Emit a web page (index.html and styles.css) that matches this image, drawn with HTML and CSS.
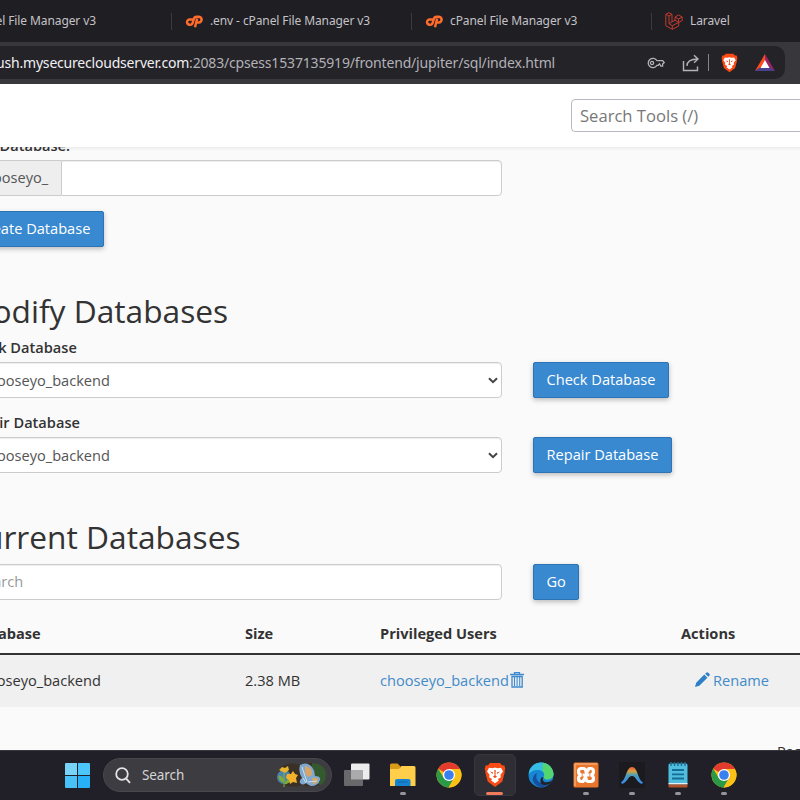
FILE: index.html
```html
<!DOCTYPE html>
<html lang="en">
<head>
    <meta charset="UTF-8">
    <meta name="viewport" content="width=device-width, initial-scale=1.0">
    <title>MySQL Databases</title>
    <link rel="stylesheet" href="styles.css">
</head>
<body>
    <!-- shared icons -->
    <svg class="defs" width="0" height="0">
        <symbol id="cp" viewBox="0 0 18 13">
            <g fill="none" stroke="#ff6c2c" stroke-width="2.5">
                <path d="M7.600 4.500H4.800a2.600 2.600 0 0 0-.3 5.200h1.300c1.100 0 1.500-.6 1.800-1.600L8.700 4.200C9.200 2.400 10 1.700 11.600 1.700h2a2.900 2.900 0 0 1 .2 5.800h-2.300"/>
                <path d="M12.200 3.500L10 12.200"/>
            </g>
        </symbol>
        <symbol id="chrome" viewBox="0 0 26 26">
            <circle cx="13" cy="13" r="12.5" fill="#fbc116"/>
            <path d="M13 13L2.2 6.8A12.5 12.5 0 0 1 23.9 7H13z" fill="#e33b2e"/>
            <path d="M2.2 6.8A12.5 12.5 0 0 0 12.6 25.5L18 16l-5-3-5.2 3z" fill="#2b9a47"/>
            <path d="M12.6 25.5A12.5 12.5 0 0 0 23.9 7H13l5.2 9z" fill="#fbc116"/>
            <circle cx="13" cy="13" r="6.1" fill="#fff"/>
            <circle cx="13" cy="13" r="4.8" fill="#3a7ff0"/>
        </symbol>
        <symbol id="brave" viewBox="0 0 22 26">
            <path d="M6 1h10l2 2.2 2.4.2L21.300 7l-.8 2 .3 1-2.500 9.500L11 25l-7.300-5.500L1.200 10l.3-1-.8-2 .9-3.600L4 3.200z" fill="#fb4a14"/>
            <path d="M5 5.800l3.500.5L11 5.500l2.500.8 3.500-.5 2 3.600-2.500 3.400.2 2.600-2.800 1.500 1 1.500-3.900 2.900-3.900-2.900 1-1.500-2.800-1.500.2-2.600L3 9.400z" fill="#fff"/>
            <path d="M5.800 9.600l3.400.8-.4 1.600zM16.200 9.600l-3.400.8.4 1.600zM10.300 8h1.400l-.2 5.500 1.600 1.200-2.100 1.300-2.100-1.300 1.600-1.200z" fill="#f04a18"/>
        </symbol>
    </svg>

    <div class="tabs">
        <div class="tab tab-first"><span>cPanel File Manager v3</span></div>
        <div class="tab">
            <svg class="tab-icon" width="18" height="13"><use href="#cp"/></svg>
            <span>.env - cPanel File Manager v3</span>
        </div>
        <div class="tab">
            <svg class="tab-icon" width="18" height="13"><use href="#cp"/></svg>
            <span>cPanel File Manager v3</span>
        </div>
        <div class="tab">
            <svg class="tab-icon" width="18" height="18" viewBox="0 0 18 18" fill="none" stroke="#c23a2e" stroke-width="1">
                <path d="M.8 2.300L4 .7l3 1.600v7.600l3-1.700V5l3.500-2 3.700 2v3.600l-3.500 2V14l-6.300 3.300L.8 13.800z"/>
                <path d="M.8 2.300L4 4v7.700l3.300 2 6.400-3.300M4 4l3-1.700M4 11.700l3-1.800M7.300 13.700v3.600M10 5l3.600 2 3.600-2M13.600 7v3.500M10 8.200l3.600 2.200"/>
            </svg>
            <span>Laravel</span>
        </div>
    </div>

    <div class="toolbar">
        <div class="address">
            <div class="url"><span class="host">ush.mysecurecloudserver.com</span><span class="path">:2083/cpsess1537135919/frontend/jupiter/sql/index.html</span></div>
            <svg class="key" width="18" height="12" viewBox="0 0 18 12" fill="none" stroke="#b4b3b8" stroke-width="1.300">
                <path d="M10 3.700A4.700 4.700 0 1 0 10 8.300h1.200l1.300-1.500 1.300 2.300h1.800V7l1.600-1.500-1.500-1.800z"/>
                <circle cx="5" cy="6" r="1.600"/>
            </svg>
            <svg class="share" width="18" height="18" viewBox="0 0 18 18" fill="none" stroke="#b4b3b8" stroke-width="1.400">
                <path d="M1.500 7v9.500h14v-4"/>
                <path d="M5 12c0-4.500 3-7 11-7M12 1.200L16 5l-4 3.800"/>
            </svg>
            <span class="divider"></span>
            <svg class="shield" width="17" height="20"><use href="#brave"/></svg>
            <svg width="20" height="17" viewBox="0 0 20 17">
                <path d="M10 0L0 17l10-6z" fill="#ff4a1c"/>
                <path d="M10 0l10 17-10-6z" fill="#972465"/>
                <path d="M0 17h20l-5-3.500H5z" fill="#4a4090"/>
                <path d="M10 6l4.500 8h-9z" fill="#fff"/>
            </svg>
        </div>
    </div>

    <header class="header">
        <input class="search-tools" type="text" placeholder="Search Tools (/)">
    </header>

    <main class="page">
        <div class="content">
            <label class="label" for="dbname">New Database:</label>
            <div class="group">
                <span class="prefix">chooseyo_</span>
                <input class="control" type="text" id="dbname">
            </div>
            <button class="btn">Create Database</button>

            <h2 class="modify">Modify Databases</h2>
            <label class="label" for="check">Check Database</label>
            <div class="row">
                <div class="control select" id="check">chooseyo_backend
                    <svg width="10" height="7" viewBox="0 0 10 7"><path d="M1 1.200l4 4 4-4" fill="none" stroke="#444" stroke-width="2"/></svg>
                </div>
                <button class="btn">Check Database</button>
            </div>
            <label class="label" for="repair">Repair Database</label>
            <div class="row">
                <div class="control select" id="repair">chooseyo_backend
                    <svg width="10" height="7" viewBox="0 0 10 7"><path d="M1 1.200l4 4 4-4" fill="none" stroke="#444" stroke-width="2"/></svg>
                </div>
                <button class="btn">Repair Database</button>
            </div>

            <h2 class="current">Current Databases</h2>
            <div class="row">
                <input class="control" type="text" placeholder="Search">
                <button class="btn">Go</button>
            </div>
            <table class="table">
                <thead>
                    <tr>
                        <th class="col-db">Database</th>
                        <th class="col-size">Size</th>
                        <th class="col-users">Privileged Users</th>
                        <th>Actions</th>
                    </tr>
                </thead>
                <tbody>
                    <tr>
                        <td>chooseyo_backend</td>
                        <td>2.38 MB</td>
                        <td><a href="#">chooseyo_backend<svg class="trash" width="14" height="16" viewBox="0 0 14 16" fill="none" stroke="#3c8ad0">
                            <path d="M0 2.500h14M4.500 2V.7h5V2M2 4.500h10.200V15H2z" stroke-width="1.300"/>
                            <path d="M4.500 5v9M7.100 5v9M9.700 5v9" stroke-width="1.100"/>
                        </svg></a></td>
                        <td class="actions"><a href="#"><svg class="pencil" width="15" height="15" viewBox="0 0 15 15" fill="#2f7fc8">
                            <path d="M0 15l1.200-4.300L9.300 2.600l3.100 3.100-8.100 8.100zM10.200 1.700l1-1c.7-.7 1.300-.7 2 0l1.100 1.100c.7.7.7 1.300 0 2l-1 1z"/>
                        </svg>Rename</a></td>
                    </tr>
                </tbody>
            </table>
            <div class="pager">Page Size</div>
        </div>
    </main>

    <footer class="taskbar">
        <svg class="start" width="25" height="25" viewBox="0 0 25 25">
            <path d="M0 1q0-1 1-1h11v12H0z" fill="#77d3f8"/>
            <path d="M13 0h11q1 0 1 1v11H13z" fill="#4cc5fa"/>
            <path d="M0 13h12v12H1q-1 0-1-1z" fill="#48c0f8"/>
            <path d="M13 13h12v11q0 1-1 1H13z" fill="#25b0f8"/>
        </svg>
        <div class="search">
            <svg width="16" height="17" viewBox="0 0 16 17" fill="none" stroke="#e4e4e6" stroke-width="1.800">
                <circle cx="7" cy="7" r="5.800"/><path d="M11 11.300l4 4.500"/>
            </svg>
            <span>Search</span>
            <svg class="butterfly" width="50" height="26" viewBox="0 0 50 26">
                <path d="M4 5Q12-1 24 3q14-6 23 5 3 9-2 14-11 4-20 1-8 3-19 0-8-10-2-18z" fill="#3b3026"/>
                <path d="M35 1q13 1 14 11 0 8-5 11l-9-3z" fill="#35592f"/>
                <circle cx="7" cy="15" r="7" fill="#4a83a8"/>
                <path d="M7 25V11M7 20q-5-1-5-6 5 1 5 6zM8 22q5-1 6-5-5 0-6 5z" fill="#80ad37" stroke="#80ad37"/>
                <path d="M2 8l3-3 3 1 3-2 1 4-4 3z" fill="#eab52e"/>
                <path d="M10 12l4 0 2-3 2 3 3 1-2 3 1 5-4-1-3 2-1-4-3-2z" fill="#f4b12b"/>
                <path d="M23 3q7-4 12 2 3 4 3 9 6 0 5 4-2 6-9 6-3-1-5-3-3 3-6 0-1-3 2-5-4-6-2-13z" fill="#7fa9ce"/>
                <path d="M28 4q8 1 7 9l-4 2-3-4zM35 16q6-1 6 2-1 4-5 4z" fill="#d7a668"/>
                <path d="M25 5l5 15M29 21l-3-5M31 20l9-1" stroke="#c8e0ee" fill="none"/>
            </svg>
        </div>

        <div class="apps">
            <div class="app">
                <svg width="26" height="26" viewBox="0 0 26 26">
                    <rect x="7" y="1.500" width="18.500" height="16" rx="1" fill="#ececec"/>
                    <rect x="0" y="8" width="19" height="16" rx="1" fill="#69696b"/>
                    <path d="M7 8h12v9.500H7z" fill="#aaaaac"/>
                </svg>
            </div>
            <div class="app open">
                <svg width="26" height="26" viewBox="0 0 26 26">
                    <path d="M0 3q0-1.500 1.500-1.500h6l3 3V9H0z" fill="#d99a17"/>
                    <path d="M0 7h9l2.500-3H24q1.500 0 1.500 1.500V24H0z" fill="#ffcf4b"/>
                    <path d="M5 24v-5q0-2 2-2h11.500q2 0 2 2v5z" fill="#1683d0"/>
                    <path d="M8 20h9.500" stroke="#0e65ae" stroke-width="1"/>
                </svg>
            </div>
            <div class="app"><svg width="26" height="26"><use href="#chrome"/></svg></div>
            <div class="app active"><svg width="22" height="26"><use href="#brave"/></svg></div>
            <div class="app">
                <svg width="26" height="26" viewBox="0 0 26 26">
                    <circle cx="13" cy="13" r="12.500" fill="#1787d4"/>
                    <path d="M1 10C4-3 24-3 25.500 12c0 6-9 7-10 3 2-4-1-7-6-7-4 0-7 2-8.500 4z" fill="#35bde4"/>
                    <path d="M15 .7c6 1 10.500 6 10.500 11.500 0 6-9 7-10 3 2-2 1-5-1-6z" fill="#55d56d"/>
                    <path d="M9 11c-3 8 4 13 14 9-3 4-7 5.500-11 5.300C3 22 3 14 9 11z" fill="#164f9b"/>
                    <path d="M15.500 15q-2 3 1 5 4 1 8-2-1.500 3-3 4-10 3-9-4 0-3 3-3z" fill="#23222a"/>
                </svg>
            </div>
            <div class="app open">
                <svg width="26" height="26" viewBox="0 0 26 26">
                    <rect x=".5" y=".5" width="25" height="25" rx="1.500" fill="#e9742b"/>
                    <path d="M2 2h22M2 2v22" stroke="#f3a66d" stroke-width="1.500"/>
                    <path d="M8.500 6.500h1.500q3 0 3 3t3-3h1.500q3 0 3 3t-3 3.500q3 .5 3 3.500t-3 3h-1.500q-3 0-3-3t-3 3H8.500q-3 0-3-3T8.500 13q-3-.5-3-3.500t3-3zM9.500 13h7" fill="none" stroke="#fff" stroke-width="3.200"/>
                </svg>
            </div>
            <div class="app open">
                <svg width="26" height="26" viewBox="0 0 26 26">
                    <defs><linearGradient id="rainbow" x2="0" y2="1"><stop offset="0" stop-color="#f05b35"/><stop offset=".25" stop-color="#d9a13f"/><stop offset=".48" stop-color="#4c9fb5"/><stop offset="1" stop-color="#3589f4"/></linearGradient></defs>
                    <rect width="26" height="26" fill="#1b1a1f"/>
                    <path d="M2 20c5-1 5-15 11-15s6 14 11 15l-1 2c-5-1-6-8-10-8s-5 7-10 8z" fill="url(#rainbow)"/>
                </svg>
            </div>
            <div class="app open">
                <svg width="20" height="26" viewBox="0 0 20 26">
                    <rect x=".5" y="1.500" width="19" height="21" rx="1.500" fill="#50bddf"/>
                    <path d="M.5 21h19v1.500H.5z" fill="#e8eef0"/>
                    <path d="M.5 22.500h19v2q0 1-1 1h-17q-1 0-1-1z" fill="#b0532d"/>
                    <path d="M3 0v4M6.500 0v4M10 0v4M13.500 0v4M17 0v4" stroke="#1a6e93" stroke-width="1.400"/>
                    <path d="M4 8h12M4 12.300h12M4 16.500h12" stroke="#136e95" stroke-width="1.800"/>
                </svg>
            </div>
            <div class="app open"><svg width="26" height="26"><use href="#chrome"/></svg></div>
        </div>
    </footer>
</body>
</html>
```
FILE: styles.css
```css
* {
    box-sizing: border-box;
}
body {
    margin: 0;
    width: 800px;
    height: 800px;
    overflow: hidden;
    display: flex;
    flex-direction: column;
    background-color: #fafafa;
    color: #333;
    font-family: "Noto Sans", sans-serif;
    font-size: 14px;
}
.defs {
    display: none;
}

/* browser */
.tabs {
    flex: none;
    height: 42px;
    display: flex;
    align-items: center;
    background-color: #1f1e23;
    color: #c3c2c7;
    font-size: 12px;
    line-height: 15px;
    letter-spacing: -0.1px;
    white-space: nowrap;
}
.tab {
    width: 240px;
    height: 17px;
    display: flex;
    flex: none;
    align-items: center;
    border-left: 1px solid #3b3a40;
    padding-left: 13px;
}
.tab span {
    padding-bottom: 2px;
}
.tab-first {
    width: 171px;
    padding: 0 75px 0 0;
    border: none;
    justify-content: flex-end;
}
.tab-icon {
    margin-right: 7px;
}
.toolbar {
    flex: none;
    height: 42px;
    padding: 4px 0 5px;
    background-color: #38373c;
}
.address {
    width: 785px;
    height: 33px;
    display: flex;
    align-items: center;
    background-color: #242328;
    border-radius: 0 10px 10px 0;
}
.url {
    width: 555px;
    display: flex;
    flex: none;
    justify-content: flex-end;
    color: #b2b1b7;
    white-space: nowrap;
}
.host {
    color: #f0f0f2;
    letter-spacing: -0.2px;
}
.path {
    letter-spacing: -0.17px;
}
.key {
    margin-left: 92px;
}
.share {
    margin-left: 17px;
}
.divider {
    width: 1px;
    height: 17px;
    margin: 0 12px 0 8px;
    background-color: #85848a;
}
.shield {
    margin-right: 17px;
}

/* page */
.header {
    flex: none;
    height: 63px;
    padding: 15px 0 0 571px;
    overflow: hidden;
    background-color: #fff;
}
.search-tools {
    width: 260px;
    height: 33px;
    padding: 0 8px;
    border: 1px solid #b9b9c3;
    border-radius: 4px;
    font-family: "Open Sans", sans-serif;
    font-size: 16.6px;
}
.search-tools::placeholder {
    color: #777;
    opacity: 1;
}
.page {
    flex: 1;
    min-height: 0;
    overflow: hidden;
    background-image: linear-gradient(#ececec, #fafafa 4px);
    font-family: "Open Sans", sans-serif;
    font-size: 14.6px;
}
.content {
    width: 876px;
    margin: -13px 0 0 -36px;
}
.label {
    display: block;
    height: 21px;
    margin-bottom: 5px;
    line-height: 23px;
    font-weight: 600;
}
.group {
    width: 538px;
    height: 36px;
    margin-bottom: 15px;
    display: flex;
}
.prefix {
    width: 97px;
    padding-left: 12px;
    line-height: 32px;
    background-color: #eee;
    border: 1px solid #ccc;
    border-right: none;
    color: #555;
}
.control {
    width: 538px;
    height: 36px;
    padding: 5px 12px 7px;
    background-color: #fff;
    border: 1px solid #ccc;
    border-radius: 4px;
    box-shadow: inset 0 1px 1px rgba(0, 0, 0, 0.075);
    color: #555;
    font-family: inherit;
    font-size: inherit;
}
.control::placeholder {
    color: #999;
    opacity: 1;
}
.group .control {
    flex: 1;
    border-radius: 0 4px 4px 0;
}
.select {
    display: flex;
    align-items: center;
    justify-content: space-between;
    padding: 0 3px 0 16px;
}
.row {
    display: flex;
    gap: 31px;
    margin-bottom: 13px;
}
.btn {
    height: 36px;
    padding: 0 12.5px 2px;
    background-color: #3889d0;
    border: 1px solid #2c74b6;
    border-radius: 2px;
    box-shadow: 0 2px 5px rgba(0, 0, 0, 0.25);
    color: #fff;
    font-family: inherit;
    font-size: inherit;
    white-space: nowrap;
}
h2 {
    height: 33px;
    margin: 0 0 9px;
    line-height: 33px;
    font-size: 31.7px;
    font-weight: 400;
}
.modify {
    margin-top: 47px;
}
.current {
    margin-top: 47px;
    margin-bottom: 11px;
}
.table {
    width: 100%;
    border-collapse: collapse;
    table-layout: fixed;
}
.table th {
    height: 41px;
    padding: 0 8px 1px;
    border-bottom: 2px solid #333;
    text-align: left;
    font-weight: 700;
}
.table td {
    height: 53px;
    padding: 0 8px 2px;
    background-color: #f0f0f0;
}
.col-db {
    width: 273px;
}
.col-size {
    width: 135px;
}
.col-users {
    width: 301px;
}
.table a {
    color: #428bca;
    text-decoration: none;
}
.trash {
    margin-left: 1px;
    vertical-align: -2px;
}
.table .actions {
    padding-left: 22px;
}
.pencil {
    margin-right: 3px;
    vertical-align: -1px;
}
.pager {
    margin: 34px 0 0 813px;
    white-space: nowrap;
}

/* taskbar */
.taskbar {
    flex: none;
    height: 50px;
    padding: 0 0 1px 65px;
    display: flex;
    align-items: center;
    background-color: #211f27;
    border-top: 1px solid #38373d;
}
.start {
    margin-right: 13px;
}
.search {
    width: 229px;
    height: 34px;
    padding: 0 4px 0 11px;
    display: flex;
    align-items: center;
    background-color: #3d3c41;
    border: 1px solid #48474d;
    border-radius: 17px;
    color: #d4d4d6;
}
.search span {
    margin-left: 11px;
    font-size: 13.5px;
    letter-spacing: -0.1px;
}
.butterfly {
    margin-left: auto;
}
.apps {
    display: flex;
    margin-left: 2.5px;
}
.app {
    width: 45.8px;
    height: 42px;
    display: flex;
    align-items: center;
    justify-content: center;
    position: relative;
}
.active {
    width: 42px;
    margin: 0 1.9px;
    background-color: #2f2e34;
    border: 1px solid #37363c;
    border-radius: 5px;
}
.open::after, .active::after {
    content: "";
    position: absolute;
    bottom: 1px;
    width: 6px;
    height: 3px;
    border-radius: 2px;
    background-color: #96959a;
}
.active::after {
    bottom: 0;
    width: 17px;
    background-color: #ef7b5c;
}
```
